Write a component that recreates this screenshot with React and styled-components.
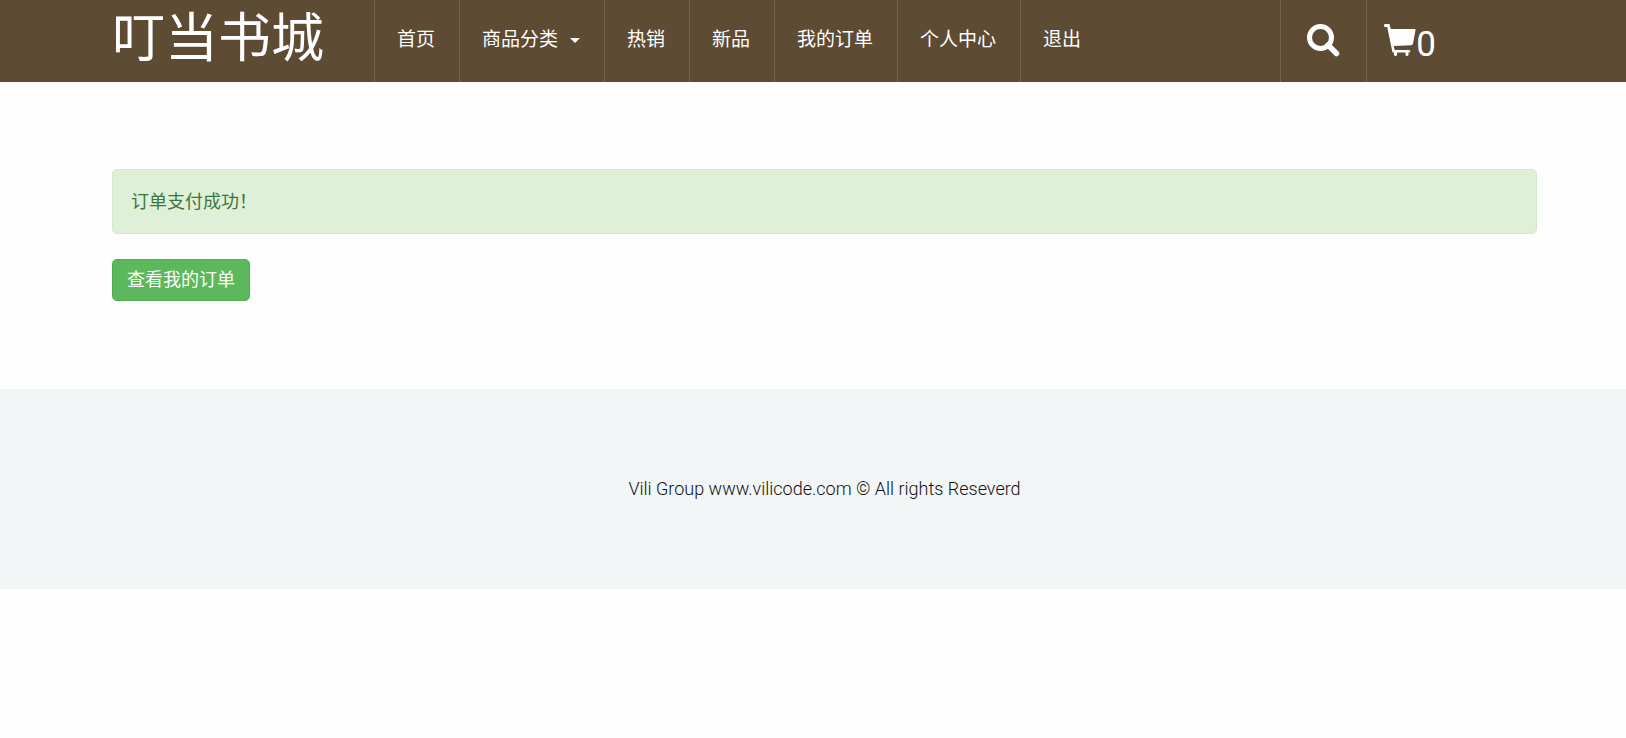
import React from 'react';
import styled, { createGlobalStyle } from 'styled-components';

const GlobalStyle = createGlobalStyle`
  * {
    box-sizing: border-box;
  }

  body {
    margin: 0;
    background: #fefefe;
    color: #333;
    font-family: Roboto, 'Noto Sans CJK SC', sans-serif;
    font-size: 18px;
    line-height: 32px;
  }
`;

const Container = styled.div`
  padding: 0 89px 0 112px;
`;

const Header = styled.header`
  background: #5d4b33;
`;

const HeaderInner = styled(Container)`
  display: flex;
  align-items: stretch;
  min-height: 82px;
`;

const Brand = styled.a`
  flex: none;
  width: 262px;
  color: #fff;
  font-size: 53px;
  line-height: 78px;
  text-decoration: none;
  white-space: nowrap;
`;

const Menu = styled.ul`
  display: flex;
  margin: 0;
  padding: 0;
  list-style: none;
`;

const MenuItem = styled.li`
  display: flex;
  border-left: 1px solid #74644e;
`;

const MenuLink = styled.a`
  display: flex;
  align-items: center;
  gap: 12px;
  padding: 0 24px 2px 22px;
  color: #fff;
  font-size: 19px;
  text-decoration: none;
  white-space: nowrap;
`;

const Caret = styled.span`
  border: 5px solid transparent;
  border-top-color: #fff;
  border-bottom: 0;
`;

const Tools = styled.div`
  display: flex;
  margin: 0 101px 0 auto;
`;

const SearchButton = styled.button`
  display: flex;
  align-items: center;
  padding: 0 26px 2px;
  border: 0;
  border-left: 1px solid #74644e;
  background: none;
  color: #fff;
  cursor: pointer;
`;

const CartLink = styled.a`
  display: flex;
  align-items: center;
  padding: 0 0 2px 17px;
  border-left: 1px solid #74644e;
  color: #fff;
  text-decoration: none;
`;

const CartCount = styled.span`
  padding-top: 10px;
  font-size: 35px;
`;

const Main = styled(Container).attrs({ as: 'main' })`
  padding-top: 87px;
  padding-bottom: 88px;
`;

const Alert = styled.div`
  margin-bottom: 25px;
  padding: 16px 18px;
  border: 1px solid #d3e9c6;
  border-radius: 5px;
  background: #def0d8;
  color: #3c763d;
  line-height: 31px;
`;

const OrdersButton = styled.button`
  display: block;
  padding: 4px 14px;
  border: 1px solid #4cae4c;
  border-radius: 5px;
  background: #5cb85c;
  color: #fff;
  font: inherit;
  cursor: pointer;
`;

const Footer = styled.footer`
  padding: 84px 0;
  background: #f2f6f7;
  color: #111;
  font-weight: 300;
  text-align: center;
`;

const links = [
  { label: '首页' },
  { label: '商品分类', dropdown: true },
  { label: '热销' },
  { label: '新品' },
  { label: '我的订单' },
  { label: '个人中心' },
  { label: '退出' }
];

const SearchIcon = () => (
  <svg width="33" height="33" viewBox="0 0 33 33" aria-hidden="true">
    <circle
      cx="13.5"
      cy="13.5"
      r="11"
      fill="none"
      stroke="currentColor"
      strokeWidth="5"
    />
    <path
      d="M21 21l8.500 8.500"
      stroke="currentColor"
      strokeWidth="5.500"
      strokeLinecap="round"
    />
  </svg>
);

const CartIcon = () => (
  <svg width="32" height="33" viewBox="0 0 32 33" aria-hidden="true">
    <path
      fill="currentColor"
      d="M1 0h4.500l1.300 5H30.500q1.200 0 1 1.200L29 19.500q-.3 1.500-1.800 1.700L9.800 22l.8 4H25q1.300 0 1.300 1.300T25 28.600h-.5v1.900q0 1.500-1.500 1.500t-1.500-1.500v-1.900H13v1.900q0 1.500-1.500 1.500T10 30.500v-1.900H8.500L3.200 3H1Q0 3 0 1.500T1 0z"
    />
  </svg>
);

const App = () => (
  <>
    <GlobalStyle />
    <Header>
      <HeaderInner>
        <Brand href="#">叮当书城</Brand>
        <Menu>
          {links.map(({ label, dropdown }) => (
            <MenuItem key={label}>
              <MenuLink href="#">
                {label}
                {dropdown && <Caret />}
              </MenuLink>
            </MenuItem>
          ))}
        </Menu>
        <Tools>
          <SearchButton type="button" aria-label="搜索">
            <SearchIcon />
          </SearchButton>
          <CartLink href="#" aria-label="购物车">
            <CartIcon />
            <CartCount>0</CartCount>
          </CartLink>
        </Tools>
      </HeaderInner>
    </Header>
    <Main>
      <Alert role="alert">订单支付成功！</Alert>
      <OrdersButton type="button">查看我的订单</OrdersButton>
    </Main>
    <Footer>
      <Container>Vili Group www.vilicode.com © All rights Reseverd</Container>
    </Footer>
  </>
);

export default App;
